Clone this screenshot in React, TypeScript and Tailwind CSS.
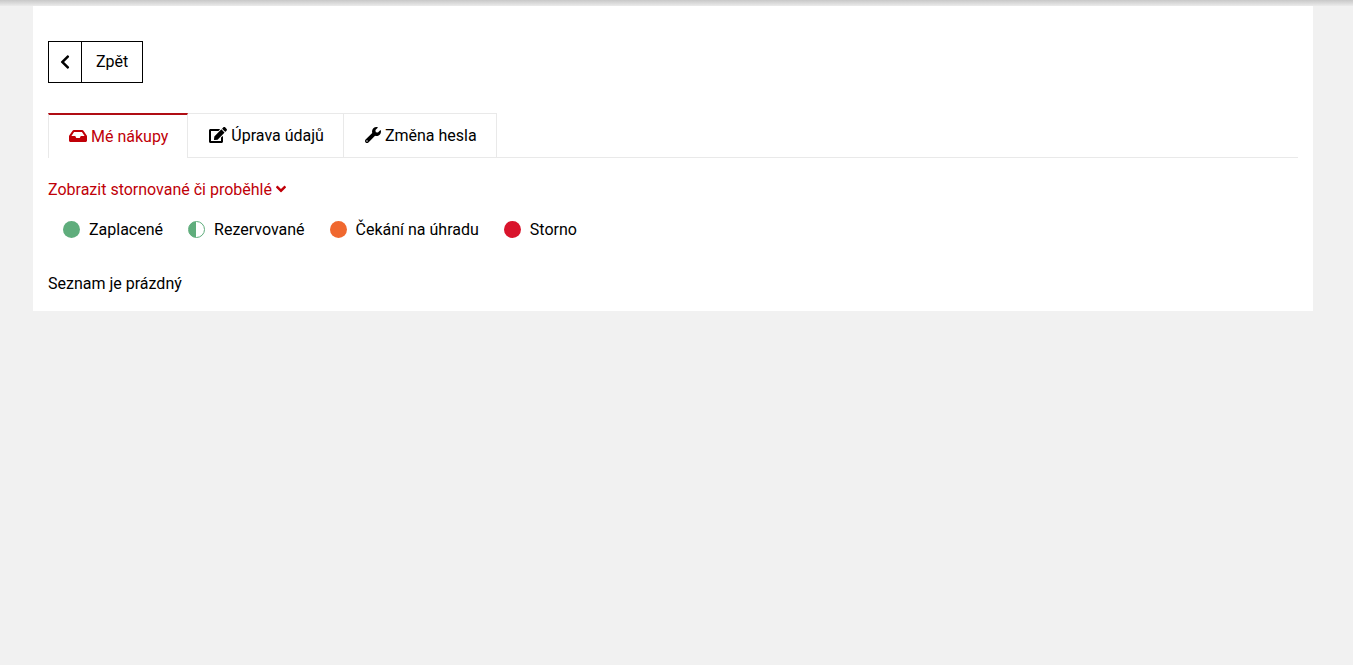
import { FaAngleDown, FaChevronLeft, FaEdit, FaInbox, FaWrench } from "react-icons/fa"

const tabs = [
  { label: "Mé nákupy", icon: <FaInbox className="mb-0.5 w-[18px] h-4" />, active: true },
  { label: "Úprava údajů", icon: <FaEdit className="mb-0.5 w-[18px] h-4" />, active: false },
  { label: "Změna hesla", icon: <FaWrench className="mb-0.5 w-4 h-4" />, active: false },
]

const statuses = [
  { label: "Zaplacené", dot: "bg-[#5fad7c]" },
  { label: "Rezervované", dot: "border border-[#5fad7c] bg-linear-to-r from-[#5fad7c] from-50% to-white to-50%" },
  { label: "Čekání na úhradu", dot: "bg-[#f0682f]" },
  { label: "Storno", dot: "bg-[#d9142c]" },
]

function Tabs() {
  return (
    <nav className="mt-[30px] flex border-b border-[#e9e9e9]">
      {tabs.map((tab) => (
        <a
          key={tab.label}
          href="#"
          className={
            tab.active
              ? "-mb-px flex h-[45px] items-center gap-1 border-x border-t-2 border-x-[#e9e9e9] border-t-[#b00d14] bg-white pr-[19px] pl-5 text-[#c00008]"
              : "flex h-11 items-center gap-1 border-t border-r border-[#e9e9e9] pr-[19px] pl-[21px]"
          }
        >
          {tab.icon}
          {tab.label}
        </a>
      ))}
    </nav>
  )
}

function Legend() {
  return (
    <ul className="mt-4 flex flex-wrap gap-x-[25px] px-[15px]">
      {statuses.map((status) => (
        <li key={status.label} className="flex items-start gap-[9px]">
          <span className={`mt-[3px] size-[17px] rounded-full ${status.dot}`} />
          {status.label}
        </li>
      ))}
    </ul>
  )
}

export default function App() {
  return (
    <div className="min-h-screen bg-[#f1f1f1] pr-[7px] font-['Roboto',sans-serif] text-base text-black">
      <div className="-mr-[7px] h-[6px] bg-linear-to-b from-[#c8c8c8] to-[#ebebeb]" />

      <main className="mx-auto max-w-[1280px] bg-white px-[15px] pt-[35px] pb-[15px]">
        <button type="button" className="flex h-[42px] items-stretch border border-black">
          <span className="flex w-[33px] items-center justify-center border-r border-black">
            <FaChevronLeft className="w-[10px] h-4" />
          </span>
          <span className="flex items-center px-[14px]">Zpět</span>
        </button>

        <Tabs />

        <a href="#" className="mt-5 flex w-fit items-center gap-1 text-[#c00008]">
          Zobrazit stornované či proběhlé
          <FaAngleDown className="mb-0.5 w-[10px] h-4" />
        </a>

        <Legend />

        <p className="mt-[30px]">Seznam je prázdný</p>
      </main>
    </div>
  )
}
